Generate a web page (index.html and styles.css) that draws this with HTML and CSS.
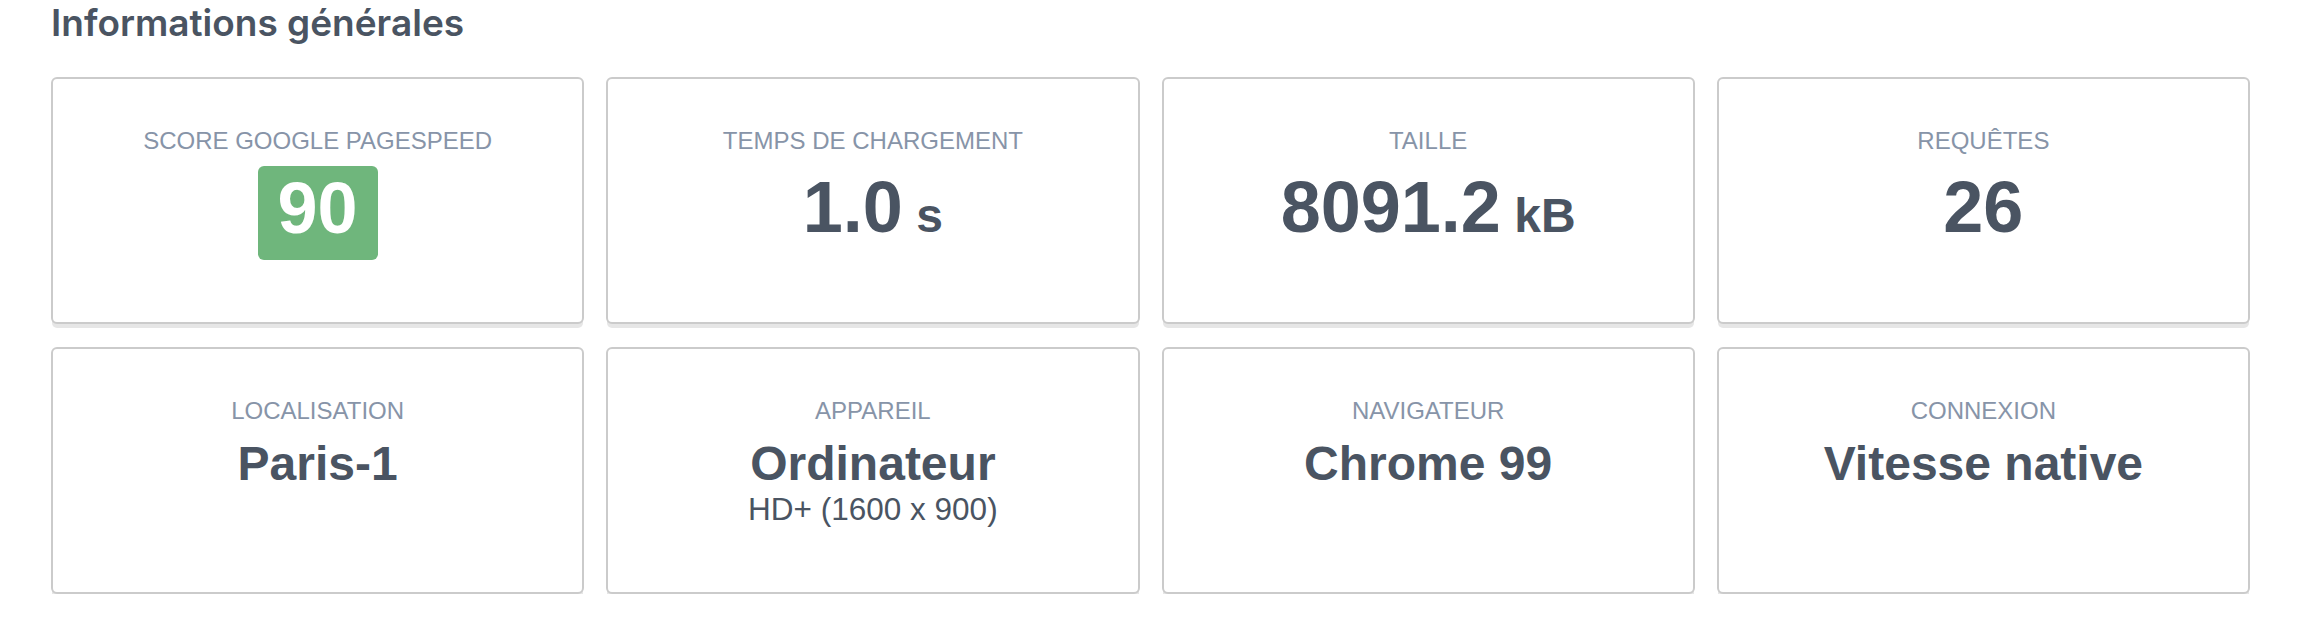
FILE: index.html
```html
<!DOCTYPE html>
<html lang="fr">
<head>
<meta charset="utf-8">
<title>Informations générales</title>
<link rel="stylesheet" href="styles.css">
</head>
<body>
<section class="section">
  <h1 class="title">Informations générales</h1>
  <div class="grid">
    <div class="card">
      <div class="label">SCORE GOOGLE PAGESPEED</div>
      <div class="value"><span class="badge">90</span></div>
    </div>
    <div class="card">
      <div class="label">TEMPS DE CHARGEMENT</div>
      <div class="value">1.0<span class="unit"> s</span></div>
    </div>
    <div class="card">
      <div class="label">TAILLE</div>
      <div class="value">8091.2<span class="unit"> kB</span></div>
    </div>
    <div class="card">
      <div class="label">REQUÊTES</div>
      <div class="value">26</div>
    </div>
    <div class="card">
      <div class="label">LOCALISATION</div>
      <div class="value small">Paris-1</div>
    </div>
    <div class="card">
      <div class="label">APPAREIL</div>
      <div class="value small">Ordinateur</div>
      <div class="sub">HD+ (1600 x 900)</div>
    </div>
    <div class="card">
      <div class="label">NAVIGATEUR</div>
      <div class="value small">Chrome 99</div>
    </div>
    <div class="card">
      <div class="label">CONNEXION</div>
      <div class="value small">Vitesse native</div>
    </div>
  </div>
</section>
</body>
</html>
```

FILE: styles.css
```css
html, body {
  margin: 0;
  padding: 0;
  background: #ffffff;
}

body {
  font-family: "Liberation Sans", Arial, sans-serif;
  color: #4a5462;
}

.section {
  padding: 0 58px 0 51px;
}

.title {
  margin: 2px 0 0;
  font-family: Inter, "Noto Sans", sans-serif;
  font-weight: 600;
  font-size: 37px;
  line-height: 42px;
  color: #4a5462;
}

.grid {
  margin-top: 33px;
  display: grid;
  grid-template-columns: repeat(4, 1fr);
  grid-auto-rows: 247px;
  column-gap: 22px;
  row-gap: 23px;
}

.card {
  box-sizing: border-box;
  border: 2px solid #cbcbcb;
  border-radius: 6px;
  box-shadow: 0 5px 0 -1px #e6e6e6;
  padding-top: 48px;
  text-align: center;
  background: #fff;
}

.label {
  font-size: 24px;
  line-height: normal;
  color: #8794a8;
}

.value {
  margin-top: 11px;
  font-size: 72px;
  font-weight: 700;
  line-height: normal;
  color: #4a5462;
}

.value.small {
  font-size: 48px;
  margin-top: 11px;
}

.unit {
  font-size: 48px;
}

.badge {
  display: inline-block;
  vertical-align: top;
  background: #6fb67c;
  color: #ffffff;
  border-radius: 6px;
  line-height: 80px;
  padding: 2px 20px 12px;
}

.sub {
  font-size: 31.5px;
  line-height: normal;
  color: #4a5462;
}
```
